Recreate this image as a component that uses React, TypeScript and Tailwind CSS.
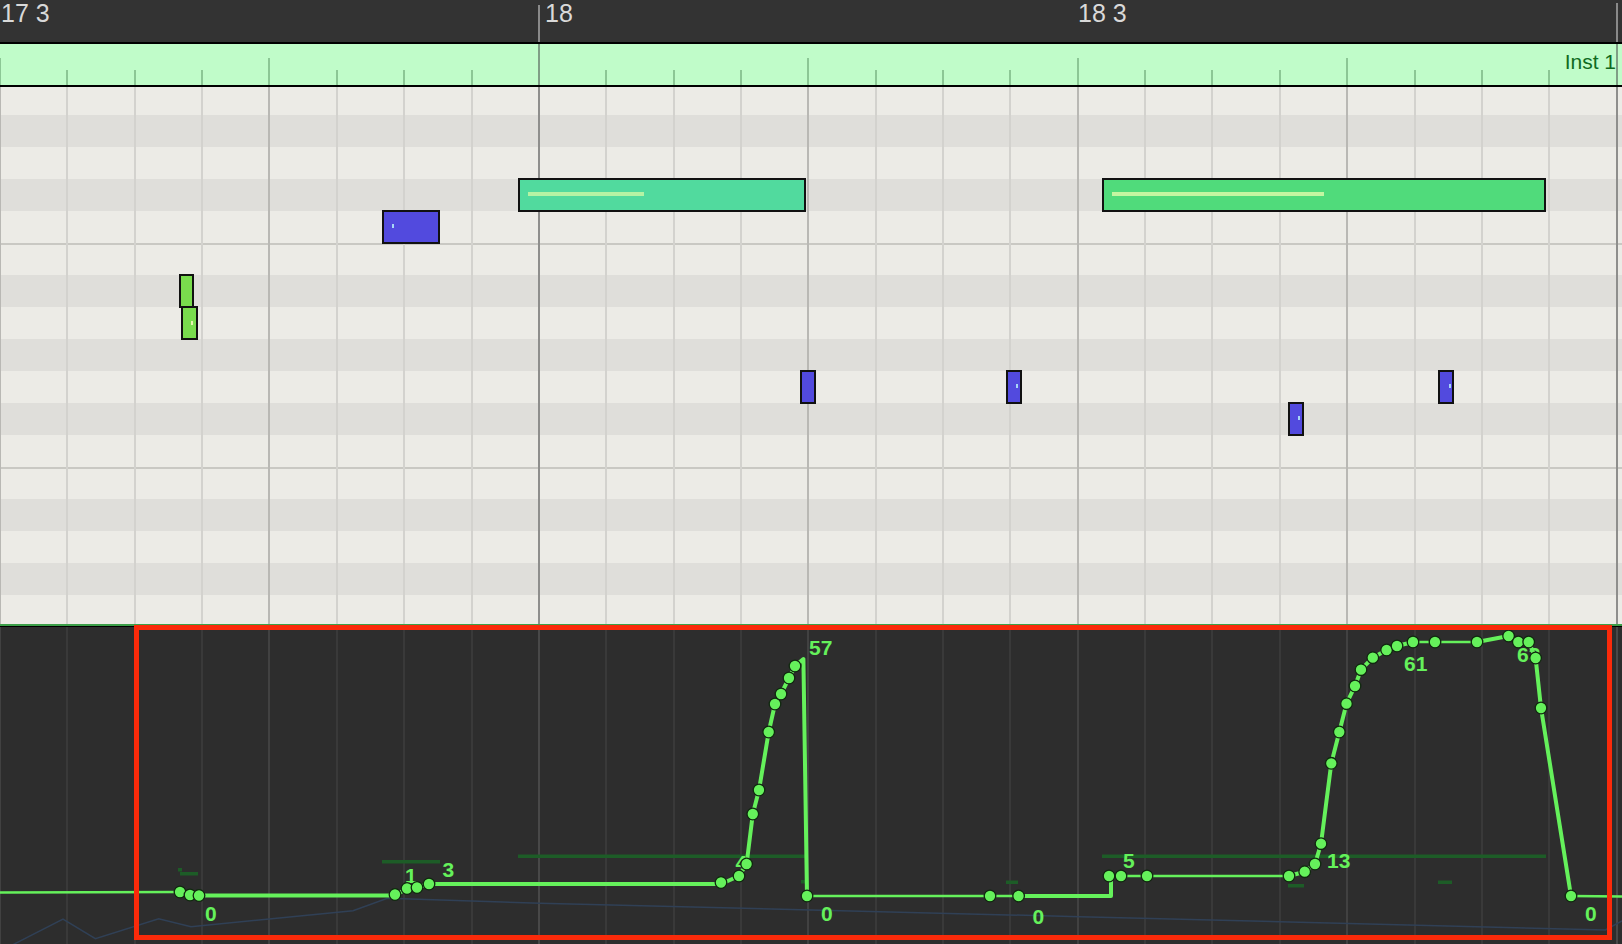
type Kind = "bar" | "beat" | "sub";

const cols = Array.from({ length: 25 }, (_, k) => k);
const kindOf = (k: number): Kind => ((k - 8) % 16 === 0 ? "bar" : k % 4 === 0 ? "beat" : "sub");

const gridLine: Record<Kind, string> = {
  bar: "border-[#8e8e8c]",
  beat: "border-[#b9b8b4]",
  sub: "border-[#d3d2ce]",
};
const laneLine: Record<Kind, string> = {
  bar: "border-[#484848]",
  beat: "border-[#414141]",
  sub: "border-[#393939]",
};
const rulerTick: Record<Kind, string> = {
  bar: "h-full bg-[#7f9e85]",
  beat: "h-[27px] bg-[#8cc795]",
  sub: "h-[15px] bg-[#8cc795]",
};

// [height, dark, octave line on top]
const rows: [number, boolean, boolean][] = [
  [28, false, false],
  [32, true, false],
  [32, false, false],
  [32, true, false],
  [32, false, false],
  [32, false, true],
  [32, true, false],
  [32, false, false],
  [32, true, false],
  [32, false, false],
  [32, true, false],
  [32, false, false],
  [32, false, true],
  [32, true, false],
  [32, false, false],
  [32, true, false],
  [29, false, false],
];

type Note = { left: number; top: number; w: number; color: string; mark?: [number, number] | "line"; line?: number };

// grid coords (grid top = 87)
const notes: Note[] = [
  { left: 179, top: 187, w: 15, color: "bg-[#79dc4d]" },
  { left: 181, top: 219, w: 17, color: "bg-[#79dc4d]", mark: [8, 13] },
  { left: 382, top: 123, w: 58, color: "bg-[#524ade]", mark: [8, 12] },
  { left: 518, top: 91, w: 288, color: "bg-[#51da9e]", mark: "line", line: 116 },
  { left: 800, top: 283, w: 16, color: "bg-[#524ade]" },
  { left: 1006, top: 283, w: 16, color: "bg-[#524ade]", mark: [8, 12] },
  { left: 1102, top: 91, w: 444, color: "bg-[#50db7b]", mark: "line", line: 212 },
  { left: 1288, top: 315, w: 16, color: "bg-[#524ade]", mark: [8, 12] },
  { left: 1438, top: 283, w: 16, color: "bg-[#524ade]", mark: [9, 12] },
];

type P = [number, number];

const pts: P[] = [
  [180, 892], [190, 895], [199, 895.5],
  [395, 894.5], [407, 888.5], [417, 887.5], [429, 884],
  [721, 882.5], [739, 876], [746.6, 864], [752.8, 814], [759, 790], [768.7, 732],
  [775, 704], [781, 694], [789, 678], [795, 666],
  [807, 896], [990, 896], [1018.6, 896],
  [1109, 876], [1121, 876], [1147, 876],
  [1289, 876], [1304.7, 871.7], [1315, 864], [1321, 843.7], [1331.3, 763.3], [1339.3, 732],
  [1346.5, 703.7], [1355, 686], [1361, 669.7], [1372.8, 657.7], [1386.6, 650], [1397, 646],
  [1413, 642], [1435, 642], [1477, 642], [1508.6, 636], [1518.3, 642], [1528.7, 642],
  [1535.6, 658], [1541, 708], [1571, 896],
];

const thick: P[][] = [
  [[180, 892], [190, 895], [199, 895.5], [395, 895.5], [407, 888.5], [417, 887.5], [429, 884], [721, 884],
    [739, 876], [746.6, 864], [752.8, 814], [759, 790], [768.7, 732], [775, 704], [781, 694], [789, 678],
    [795, 666], [803.4, 659], [807, 896]],
  [[1018.6, 896], [1111, 896], [1111, 876]],
  [[1289, 876], [1304.7, 871.7], [1315, 864], [1321, 843.7], [1331.3, 763.3], [1339.3, 732], [1346.5, 703.7],
    [1355, 686], [1361, 669.7], [1372.8, 657.7], [1386.6, 650], [1397, 646], [1413, 642]],
  [[1477, 642], [1508.6, 636], [1518.3, 642], [1528.7, 642], [1535.6, 658], [1541, 708], [1571, 896]],
];

const thin: P[][] = [
  [[0, 892.5], [180, 892]],
  [[807, 896], [990, 896], [1018.6, 896]],
  [[1109, 876], [1121, 876], [1147, 876], [1289, 876]],
  [[1413, 642], [1435, 642], [1477, 642]],
  [[1571, 896], [1622, 896.5]],
];

const shadow: P[] = [
  [0, 952], [15.5, 943.3], [63, 919], [95.4, 938.7], [158.7, 918.7], [191, 926.7], [353, 910.7],
  [387.4, 898.3], [540, 903.3], [1080, 916.7], [1605.4, 930], [1622, 921],
];

// velocity bars [x1, x2, y]
const bars: [number, number, number][] = [
  [178, 182, 868],
  [180, 198, 872],
  [382, 440, 860],
  [518, 806, 854.5],
  [801, 807, 880],
  [1006, 1018, 880.5],
  [1102, 1546, 854.5],
  [1288, 1304, 884],
  [1438, 1452, 880.5],
];

const labels: [string, number, number][] = [
  ["0", 205, 920.5],
  ["1", 405, 883],
  ["3", 442.5, 876.5],
  ["4", 735.5, 869.5],
  ["57", 809, 655],
  ["0", 821, 920.5],
  ["0", 1032.5, 924],
  ["5", 1123, 868],
  ["13", 1327, 868],
  ["61", 1404, 670.5],
  ["63", 1517, 661.5],
  ["0", 1585, 920.5],
];

const toStr = (p: P[]) => p.map(([x, y]) => `${x},${y}`).join(" ");

function Header() {
  return (
    <div className="relative h-[42px] bg-[#333333] text-[25px] leading-none text-[#d9d9d9]">
      <span className="absolute left-[1px] top-[1px]">17 3</span>
      <div className="absolute left-[538px] top-[5px] bottom-0 w-[2px] bg-[#8a8a8a]" />
      <span className="absolute left-[545px] top-[1px]">18</span>
      <span className="absolute left-[1078px] top-[1px]">18 3</span>
      <div className="absolute left-[1616px] top-[3px] bottom-0 w-[2px] bg-[#8a8a8a]" />
    </div>
  );
}

function Ruler() {
  return (
    <div className="relative h-[41px] bg-[#c0fcc9]">
      <div className="-ml-px flex h-full">
        {cols.map((k) => (
          <div key={k} className="flex h-full w-[67.36px] shrink-0 items-end">
            <div className={`w-[2px] ${rulerTick[kindOf(k)]}`} />
          </div>
        ))}
      </div>
      <span className="absolute right-[6px] top-[7px] text-[21px] leading-none text-[#0f6a1e]">Inst 1</span>
    </div>
  );
}

function PianoGrid() {
  return (
    <div className="relative h-[537px]">
      <div className="flex h-full flex-col">
        {rows.map(([h, dark, line], i) => (
          <div
            key={i}
            style={{ height: h }}
            className={`${dark ? "bg-[#dfdeda]" : "bg-[#ecebe6]"} ${line ? "border-t-2 border-[#c9c8c3]" : ""}`}
          />
        ))}
      </div>
      <div className="absolute inset-y-0 -left-px flex">
        {cols.map((k) => (
          <div key={k} className={`h-full w-[67.36px] shrink-0 border-l-2 ${gridLine[kindOf(k)]}`} />
        ))}
      </div>
      {notes.map((n, i) => (
        <div
          key={i}
          className={`absolute h-[34px] border-2 border-[#111111] ${n.color}`}
          style={{ left: n.left, top: n.top, width: n.w }}
        >
          {n.mark === "line" && (
            <div
              className={`absolute left-[8px] top-[12px] h-[4px] ${n.left > 1000 ? "bg-[#c4f6a1]" : "bg-[#b5f3a4]"}`}
              style={{ width: n.line }}
            />
          )}
          {Array.isArray(n.mark) && (
            <div
              className={`absolute h-[4px] w-[2px] ${n.color === "bg-[#524ade]" ? "bg-[#a6d6f6]" : "bg-[#e8f6b0]"}`}
              style={{ left: n.mark[0], top: n.mark[1] }}
            />
          )}
        </div>
      ))}
    </div>
  );
}

function AutomationLane() {
  return (
    <div className="relative flex-1">
      <div className="absolute inset-y-0 -left-px flex">
        {cols.map((k) => (
          <div key={k} className={`h-full w-[67.36px] shrink-0 border-l-2 ${laneLine[kindOf(k)]}`} />
        ))}
      </div>
      <svg className="absolute inset-0 h-full w-full" viewBox="0 627 1622 317" preserveAspectRatio="none">
        <polyline points={toStr(shadow)} fill="none" stroke="#304056" strokeWidth={1.5} />
        {bars.map(([x1, x2, y], i) => (
          <rect key={i} x={x1} y={y} width={x2 - x1} height={3.5} fill="#1d5c27" />
        ))}
        {thin.map((p, i) => (
          <polyline key={i} points={toStr(p)} fill="none" stroke="#65f15b" strokeWidth={2.5} strokeLinejoin="round" />
        ))}
        {thick.map((p, i) => (
          <polyline key={i} points={toStr(p)} fill="none" stroke="#65f15b" strokeWidth={4} strokeLinejoin="round" />
        ))}
        {labels.map(([t, x, y], i) => (
          <text
            key={i}
            x={x}
            y={y}
            fill="#65f15b"
            fontSize={21}
            fontWeight={700}
            fontFamily="'Liberation Sans', Arial, sans-serif"
          >
            {t}
          </text>
        ))}
        {pts.map(([x, y], i) => (
          <circle key={i} cx={x} cy={y} r={5.8} fill="#65f15b" stroke="#10280f" strokeWidth={1.3} />
        ))}
      </svg>
    </div>
  );
}

export default function App() {
  return (
    <div className="relative flex h-[944px] w-[1622px] flex-col overflow-hidden bg-[#2d2d2d] font-['Liberation_Sans',Arial,sans-serif]">
      <Header />
      <div className="h-[2px] bg-black" />
      <Ruler />
      <div className="h-[2px] bg-black" />
      <PianoGrid />
      <div className="h-[2px] bg-[#3c9f49]" />
      <div className="h-px bg-black" />
      <AutomationLane />
      <div className="absolute left-[134px] top-[625px] h-[315px] w-[1478px] border-[5px] border-[#fa2a0a]" />
    </div>
  );
}
